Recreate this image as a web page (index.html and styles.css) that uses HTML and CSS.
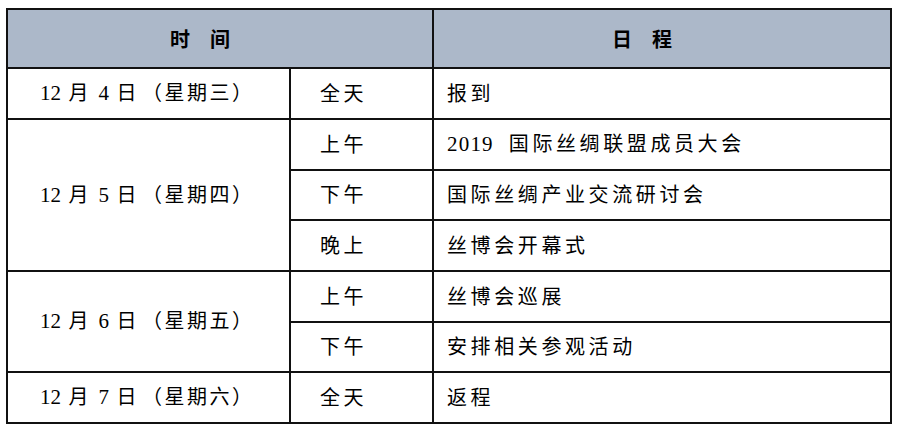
FILE: index.html
```html
<!DOCTYPE html>
<html lang="zh-CN">
<head>
<meta charset="utf-8">
<title>日程安排</title>
<link rel="stylesheet" href="styles.css">
</head>
<body>
<div class="schedule">
  <div class="cell head head-time">时　间</div>
  <div class="cell head head-plan">日　程</div>

  <div class="cell date r1"><span class="txt"><span class="d">12</span> 月 <span class="d">4</span> 日<span class="wk">（星期三）</span></span></div>
  <div class="cell slot">全天</div>
  <div class="cell item">报到</div>

  <div class="cell date r2"><span class="txt"><span class="d">12</span> 月 <span class="d">5</span> 日<span class="wk">（星期四）</span></span></div>
  <div class="cell slot">上午</div>
  <div class="cell item"><span class="txt"><span class="num">2019</span>国际丝绸联盟成员大会</span></div>
  <div class="cell slot">下午</div>
  <div class="cell item">国际丝绸产业交流研讨会</div>
  <div class="cell slot">晚上</div>
  <div class="cell item">丝博会开幕式</div>

  <div class="cell date r5"><span class="txt"><span class="d">12</span> 月 <span class="d">6</span> 日<span class="wk">（星期五）</span></span></div>
  <div class="cell slot">上午</div>
  <div class="cell item">丝博会巡展</div>
  <div class="cell slot">下午</div>
  <div class="cell item">安排相关参观活动</div>

  <div class="cell date r7"><span class="txt"><span class="d">12</span> 月 <span class="d">7</span> 日<span class="wk">（星期六）</span></span></div>
  <div class="cell slot">全天</div>
  <div class="cell item">返程</div>
</div>
</body>
</html>
```

FILE: styles.css
```css
html, body {
  margin: 0;
  padding: 0;
  background: #ffffff;
}

body {
  padding: 8px 0 0 6px;
  font-family: "Liberation Serif", "Noto Sans CJK SC", serif;
  color: #000;
}

.schedule {
  display: grid;
  width: 882px;
  grid-template-columns: 281px 141px 456px;
  grid-template-rows: 57px 49px 49px 48px 49px 49px 48px 49px;
  gap: 2px;
  padding: 2px;
  background: #111111;
}

.cell {
  background: #ffffff;
  display: flex;
  align-items: center;
  font-size: 20px;
  line-height: 1;
  white-space: nowrap;
}

.head {
  background: #acb8c9;
  justify-content: center;
  font-weight: bold;
  font-family: "Noto Sans CJK SC", sans-serif;
  padding-right: 40px;
}

.head-time {
  grid-column: 1 / 3;
}

.head-plan {
  grid-column: 3;
}

.date {
  grid-column: 1;
  padding-left: 32px;
  letter-spacing: 2.5px;
}

.d {
  font-size: 21px;
  letter-spacing: 0;
}

.wk {
  margin-left: 3px;
}

.r1 { grid-row: 2; }
.r2 { grid-row: 3 / 6; }
.r5 { grid-row: 6 / 8; }
.r7 { grid-row: 8; }

.slot {
  grid-column: 2;
  padding-left: 29px;
  letter-spacing: 3.5px;
}

.item {
  grid-column: 3;
  padding-left: 13px;
  letter-spacing: 3.6px;
}

.num {
  font-size: 21px;
  letter-spacing: 1.2px;
  margin-right: 15px;
}
```
